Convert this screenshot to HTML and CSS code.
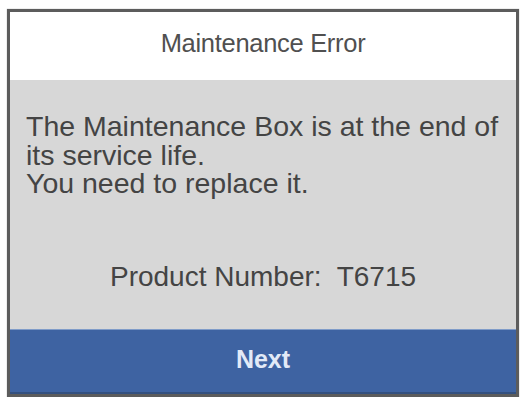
FILE: index.html
```html
<!DOCTYPE html>
<html>
<head>
<meta charset="utf-8">
<link rel="stylesheet" href="styles.css">
</head>
<body>
<div class="panel">
  <div class="header">Maintenance Error</div>
  <div class="content">
    <p class="message">The Maintenance Box is at the end of<br>its service life.<br>You need to replace it.</p>
    <p class="product">Product Number:&nbsp; T6715</p>
  </div>
  <div class="footer">Next</div>
</div>
</body>
</html>
```
FILE: styles.css
```css
html, body {
  margin: 0;
  padding: 0;
  background: #ffffff;
}
body {
  padding: 9px 0 0 7px;
  font-family: "Liberation Sans", Arial, sans-serif;
}
.panel {
  box-sizing: border-box;
  width: 512px;
  height: 388px;
  border: 3px solid #5c5c5c;
  display: flex;
  flex-direction: column;
  box-shadow: 0 0 1px rgba(0,0,0,0.4);
}
.header {
  height: 68px;
  flex: none;
  background: #ffffff;
  color: #505050;
  font-size: 25.5px;
  letter-spacing: -0.3px;
  display: flex;
  align-items: center;
  justify-content: center;
  padding-bottom: 6px;
  box-sizing: border-box;
}
.content {
  flex: 1;
  background: #d7d7d7;
  color: #444444;
  display: flex;
  flex-direction: column;
  padding: 32px 0 0 16px;
}
.message {
  margin: 0;
  font-size: 28.5px;
  line-height: 28.5px;
  letter-spacing: 0;
}
.product {
  margin: 64px 0 0 -16px;
  text-align: center;
  font-size: 28px;
  line-height: 29px;
  letter-spacing: 0;
}
.footer {
  height: 65px;
  flex: none;
  background: #3e63a2;
  color: #e2eaf7;
  font-size: 25px;
  font-weight: bold;
  display: flex;
  align-items: center;
  justify-content: center;
  border-top: 1px solid #7f9bc8;
  border-bottom: 2px solid #33507f;
  box-sizing: border-box;
  padding-bottom: 3px;
}
```
